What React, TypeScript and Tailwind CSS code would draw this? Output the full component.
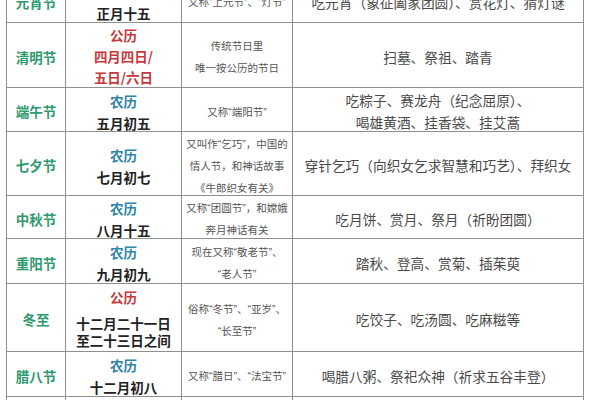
import React from "react";

const cell = "bg-white flex flex-col items-center justify-center text-center overflow-hidden";

function L() {
  return <span className="font-['Liberation_Sans',sans-serif]">“</span>;
}
function R() {
  return <span className="font-['Liberation_Sans',sans-serif]">”</span>;
}

function Name({ children }: { children: React.ReactNode }) {
  return (
    <div className={cell + " pt-[3px]"}>
      <span className="text-[13.5px] font-bold text-[#2e9a6e] leading-[20px]">{children}</span>
    </div>
  );
}

function Lunar({ date }: { date: string }) {
  return (
    <div className={cell + " pt-[4px]"}>
      <span className="text-[13.5px] font-bold text-[#2f86aa] leading-[22px]">农历</span>
      <span className="text-[13.5px] font-bold text-[#222] leading-[22px]">{date}</span>
    </div>
  );
}

function Desc({ children }: { children: React.ReactNode }) {
  return (
    <div className={cell + " pt-[4px]"}>
      <div className="text-[10.5px] text-[#555] leading-[22px] whitespace-nowrap">{children}</div>
    </div>
  );
}

function Custom({ children }: { children: React.ReactNode }) {
  return (
    <div className={cell + " pt-[3px]"}>
      <div className="text-[13.7px] text-[#4a4a4a] leading-[22px] whitespace-nowrap">{children}</div>
    </div>
  );
}

export default function App() {
  return (
    <div className="w-[600px] h-[400px] overflow-hidden bg-white font-['Noto_Sans_CJK_SC',sans-serif]">
      <div className="ml-[6px] -mt-[23px] w-[578px] grid grid-cols-[58px_115px_110px_290px] grid-rows-[44px_64px_43px_63px_42px_44px_67px_44px_44px] gap-px p-px bg-[#8f8f8f]">
        {/* 元宵节 */}
        <Name>元宵节</Name>
        <Lunar date="正月十五" />
        <Desc>
          又称<L />上元节<R />、<L />灯节<R />
        </Desc>
        <Custom>吃元宵（象征阖家团圆）、赏花灯、猜灯谜</Custom>

        {/* 清明节 */}
        <Name>清明节</Name>
        <div className={cell + " pt-[3px]"}>
          <span className="text-[13.5px] font-bold text-[#c8383a] leading-[21px]">公历</span>
          <span className="text-[13.5px] font-bold text-[#c8383a] leading-[21px]">四月四日/</span>
          <span className="text-[13.5px] font-bold text-[#c8383a] leading-[21px]">五日/六日</span>
        </div>
        <Desc>
          传统节日里
          <br />
          唯一按公历的节日
        </Desc>
        <Custom>扫墓、祭祖、踏青</Custom>

        {/* 端午节 */}
        <Name>端午节</Name>
        <Lunar date="五月初五" />
        <Desc>
          又称<L />端阳节<R />
        </Desc>
        <Custom>
          吃粽子、赛龙舟（纪念屈原）、
          <br />
          喝雄黄酒、挂香袋、挂艾蒿
        </Custom>

        {/* 七夕节 */}
        <Name>七夕节</Name>
        <Lunar date="七月初七" />
        <Desc>
          又叫作<L />乞巧<R />，中国的
          <br />
          情人节，和神话故事
          <br />
          《牛郎织女有关》
        </Desc>
        <Custom>穿针乞巧（向织女乞求智慧和巧艺）、拜织女</Custom>

        {/* 中秋节 */}
        <Name>中秋节</Name>
        <Lunar date="八月十五" />
        <Desc>
          又称<L />团圆节<R />，和嫦娥
          <br />
          奔月神话有关
        </Desc>
        <Custom>吃月饼、赏月、祭月（祈盼团圆）</Custom>

        {/* 重阳节 */}
        <Name>重阳节</Name>
        <Lunar date="九月初九" />
        <Desc>
          现在又称<L />敬老节<R />、
          <br />
          <L />老人节<R />
        </Desc>
        <Custom>踏秋、登高、赏菊、插茱萸</Custom>

        {/* 冬至 */}
        <Name>冬至</Name>
        <div className={cell + " !justify-start pt-[3px]"}>
          <span className="text-[13.5px] font-bold text-[#c8383a] leading-[20px]">公历</span>
          <span className="mt-[8px] text-[13.5px] font-bold text-[#222] leading-[17px]">十二月二十一日</span>
          <span className="text-[13.5px] font-bold text-[#222] leading-[17px]">至二十三日之间</span>
        </div>
        <Desc>
          俗称<L />冬节<R />、<L />亚岁<R />、
          <br />
          <L />长至节<R />
        </Desc>
        <Custom>吃饺子、吃汤圆、吃麻糍等</Custom>

        {/* 腊八节 */}
        <Name>腊八节</Name>
        <Lunar date="十二月初八" />
        <Desc>
          又称<L />腊日<R />、<L />法宝节<R />
        </Desc>
        <Custom>喝腊八粥、祭祀众神（祈求五谷丰登）</Custom>

        {/* next row (cut off) */}
        <div className="bg-white" />
        <div className="bg-white" />
        <div className="bg-white" />
        <div className="bg-white" />
      </div>
    </div>
  );
}
